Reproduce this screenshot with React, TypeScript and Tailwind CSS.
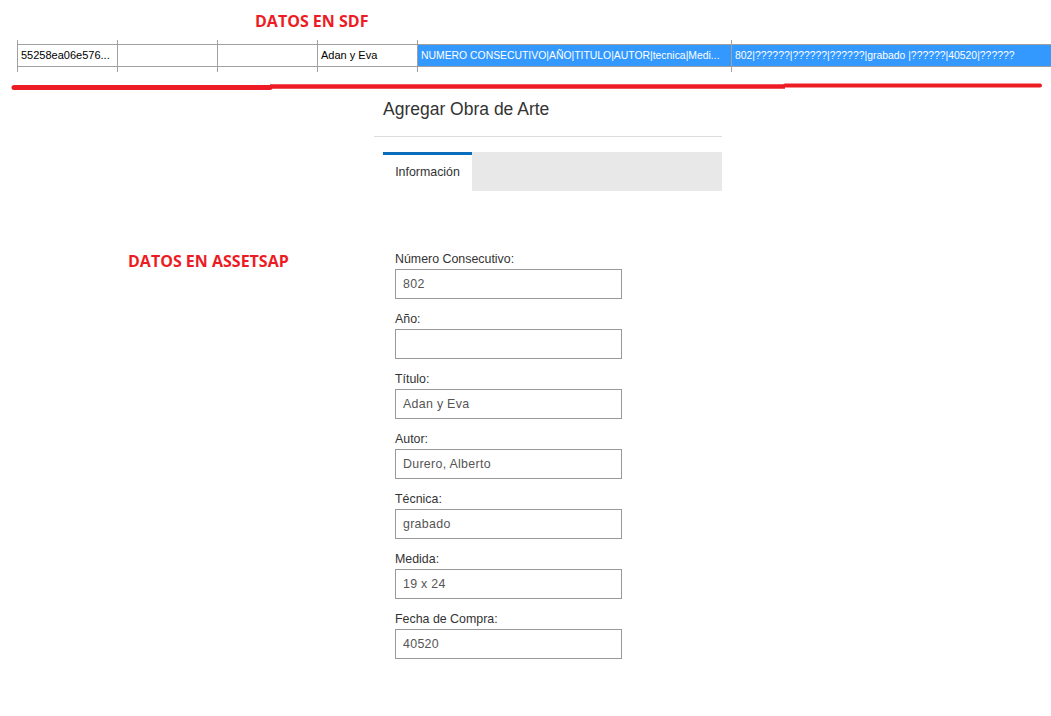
const sdfCells = [
  { w: "w-[100px]", text: "55258ea06e576...", blue: false },
  { w: "w-[100px]", text: "", blue: false },
  { w: "w-[100px]", text: "", blue: false },
  { w: "w-[100px]", text: "Adan y Eva", blue: false },
  { w: "w-[314px]", text: "NUMERO CONSECUTIVO|AÑO|TITULO|AUTOR|tecnica|Medi...", blue: true },
  { w: "flex-1", text: "802|??????|??????|??????|grabado |??????|40520|??????", blue: true },
];

const fields = [
  { label: "Número Consecutivo:", value: "802" },
  { label: "Año:", value: "" },
  { label: "Título:", value: "Adan y Eva" },
  { label: "Autor:", value: "Durero, Alberto" },
  { label: "Técnica:", value: "grabado" },
  { label: "Medida:", value: "19 x 24" },
  { label: "Fecha de Compra:", value: "40520" },
];

function RedUnderline() {
  // hand-drawn marker line under the SDF row
  return (
    <svg width="1051" height="24" viewBox="0 0 1051 24" className="block">
      <line x1="14" y1="15.5" x2="270" y2="15.5" stroke="#ed1c24" strokeWidth="5" strokeLinecap="round" />
      <line x1="270" y1="14.5" x2="785" y2="14.5" stroke="#ed1c24" strokeWidth="4.5" strokeLinecap="butt" />
      <line x1="785" y1="13.5" x2="1040" y2="13.5" stroke="#ed1c24" strokeWidth="4" strokeLinecap="round" />
    </svg>
  );
}

export default function App() {
  return (
    <div className="h-[716px] w-[1051px] overflow-hidden bg-white">
      <div className="pl-[255px] pt-[10px] font-['Open_Sans',sans-serif] text-[16px] font-bold leading-[22px] text-[#ed1c24]">
        DATOS EN SDF
      </div>

      <div className="mt-[8px] ml-[17px] flex font-['Liberation_Sans',Arial,sans-serif]">
        {sdfCells.map((c, i) => (
          <div key={i} className={`${c.w} border-l border-[#a0a0a0] pt-[4px] pb-[5px]`}>
            <div
              className={`flex h-[23px] items-center overflow-hidden whitespace-nowrap border-y border-[#a0a0a0] pl-[3px] ${
                c.blue ? "bg-[#3399ff] text-[10.4px] text-white" : "text-[11px] text-black"
              }`}
            >
              {c.text}
            </div>
          </div>
        ))}
      </div>

      <RedUnderline />

      <div className="ml-[374px] w-[348px] font-['Liberation_Sans',Arial,sans-serif]">
        <div className="border-b border-[#dddddd] pl-[9px] pt-[3px] pb-[17px] text-[17.5px] leading-[20px] text-[#333333]">
          Agregar Obra de Arte
        </div>
        <div className="mt-[15px] ml-[9px] flex h-[39px]">
          <div className="flex w-[89px] items-center justify-center border-t-[3px] border-[#0a6ebd] bg-white pb-[1px] text-[12.4px] text-[#333333]">
            Información
          </div>
          <div className="flex-1 bg-[#e8e8e8]" />
        </div>
      </div>

      <div className="mt-[57px] flex">
        <div className="w-[395px] pl-[128px] pt-[2px] font-['Open_Sans',sans-serif] text-[16px] font-bold leading-[22px] text-[#ed1c24]">
          DATOS EN ASSETSAP
        </div>
        <div className="flex flex-col pt-[4px] font-['Liberation_Sans',Arial,sans-serif]">
          {fields.map((f) => (
            <div key={f.label} className="mb-[13px] flex flex-col">
              <label className="mb-[3px] text-[12.4px] leading-[14px] text-[#333333]">{f.label}</label>
              <input
                readOnly
                defaultValue={f.value}
                className="h-[30px] w-[227px] border border-[#999999] bg-white px-[7px] font-['Liberation_Sans',Arial,sans-serif] text-[12.4px] tracking-[0.3px] text-[#555555] outline-none"
              />
            </div>
          ))}
        </div>
      </div>
    </div>
  );
}
